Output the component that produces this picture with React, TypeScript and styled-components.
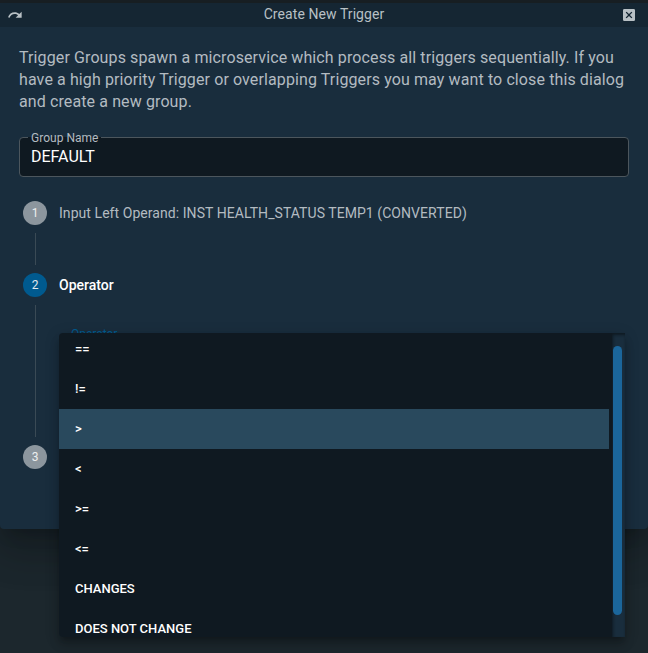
import React from "react";
import styled, { createGlobalStyle } from "styled-components";

const GlobalStyle = createGlobalStyle`
  *, *::before, *::after { box-sizing: border-box; }
  body {
    margin: 0;
    overflow: hidden;
    background: #1c272d;
    font-family: Roboto, "Liberation Sans", sans-serif;
    color: #fff;
  }
`;

const Page = styled.div`
  position: relative;
  height: 653px;
  padding-top: 3px;
  overflow: hidden;
  background: linear-gradient(#1a2126 0, #1a2126 3px, #1c272d 3px);
`;

const Dialog = styled.section`
  height: 526px;
  border-radius: 4px;
  background: #192d3d;
  box-shadow: 0 11px 15px -7px rgba(0, 0, 0, 0.2),
    0 24px 38px 3px rgba(0, 0, 0, 0.14), 0 9px 46px 8px rgba(0, 0, 0, 0.12);
`;

const TitleBar = styled.header`
  display: flex;
  align-items: center;
  justify-content: space-between;
  height: 24px;
  padding: 0 11px 0 7px;
  background: #152633;
  color: #b8c0c5;
`;

const Title = styled.h1`
  margin: 0;
  padding: 0 0 2px 4px;
  font-size: 14px;
  font-weight: 400;
  line-height: 20px;
  letter-spacing: 0.08px;
`;

const Icon = styled.svg`
  display: block;
  width: 16px;
  height: 16px;
  fill: currentColor;
`;

const Body = styled.div`
  padding: 20px 19px 0;
`;

const Intro = styled.p`
  margin: 0;
  color: #b3bbc1;
  font-size: 16px;
  line-height: 22px;
  letter-spacing: 0.11px;
  white-space: nowrap;
`;

const Field = styled.div`
  position: relative;
  height: 48px;
  margin-top: 24px;
`;

const FieldBox = styled.div`
  height: 40px;
  padding: 9px 11px 0;
  border: 1px solid #4c565d;
  border-radius: 4px;
  background: #0f1921;
  font-size: 16px;
  line-height: 20px;
`;

const FieldLabel = styled.span`
  position: absolute;
  z-index: 1;
  top: -8px;
  left: 9px;
  padding: 0 3px;
  color: #b3bbc1;
  font-size: 12px;
  line-height: 18px;
  letter-spacing: 0.02px;

  &::before {
    content: "";
    position: absolute;
    z-index: -1;
    inset: 8px 0 9px;
    background: #0f1921;
  }
`;

const Stepper = styled.div`
  display: flex;
  flex-direction: column;
  padding: 16px 4px 0;
`;

const Step = styled.div<{ $active?: boolean }>`
  display: flex;
  align-items: center;
  gap: 12px;
  height: 24px;
  color: ${(p) => (p.$active ? "#fff" : "#b3bbc1")};
  font-size: 14px;
  font-weight: ${(p) => (p.$active ? 500 : 400)};
  letter-spacing: ${(p) => (p.$active ? "0" : "0.06px")};
`;

const Badge = styled.span<{ $active?: boolean }>`
  display: grid;
  place-items: center;
  width: 24px;
  height: 24px;
  border-radius: 50%;
  background: ${(p) => (p.$active ? "#005a8f" : "#8c969e")};
  color: ${(p) => (p.$active ? "#e1eaf0" : "#eceeef")};
  font-size: 12px;
  font-weight: 400;
  letter-spacing: 0;
`;

const Connector = styled.div<{ $height: number }>`
  width: 1px;
  height: ${(p) => p.$height}px;
  margin: 8px 0 8px 12px;
  background: #3a4a55;
`;

const StepContent = styled.div`
  display: flex;
`;

const OperatorLabel = styled.span`
  margin: 28px 0 0 35px;
  color: #005a8f;
  font-size: 12px;
  line-height: 18px;
`;

const Menu = styled.div`
  position: absolute;
  top: 333px;
  left: 59px;
  width: 566px;
  height: 304px;
  border-radius: 4px;
  box-shadow: 0 5px 5px -3px rgba(0, 0, 0, 0.2),
    0 8px 10px 1px rgba(0, 0, 0, 0.14), 0 3px 14px 2px rgba(0, 0, 0, 0.12);
`;

const MenuSheet = styled.div`
  display: flex;
  height: 100%;
  overflow: hidden;
  border-radius: 4px 0 0 4px;
  background: #0f1921;
`;

const Options = styled.div`
  width: 550px;
  margin-top: -4px;
`;

const Option = styled.div<{ $selected?: boolean }>`
  display: flex;
  align-items: center;
  height: 40px;
  padding: 0 16px;
  background: ${(p) => (p.$selected ? "#29495d" : "transparent")};
  font-size: 13px;
  font-weight: 500;
  line-height: 16px;
`;

const Track = styled.div`
  width: 13px;
  height: 304px;
  margin-left: 3px;
  padding: 13px 3px 0 1px;
  background: #192d3d;
  box-shadow: inset 1px 2px 3px #0f1a22;
`;

const Thumb = styled.div`
  width: 9px;
  height: 269px;
  border-radius: 5px;
  background: #1b669b;
`;

const operators = ["==", "!=", ">", "<", ">=", "<=", "CHANGES", "DOES NOT CHANGE"];

export default function App() {
  return (
    <Page>
      <GlobalStyle />
      <Dialog>
        <TitleBar>
          <Icon viewBox="0 0 24 24">
            <path d="M18.4,10.6C16.55,9 14.15,8 11.5,8C6.85,8 2.92,11.03 1.54,15.22L3.9,16C4.95,12.81 7.95,10.5 11.5,10.5C13.45,10.5 15.23,11.22 16.62,12.38L13,16H22V7L18.4,10.6Z" />
          </Icon>
          <Title>Create New Trigger</Title>
          <Icon viewBox="0 0 24 24">
            <path d="M19,3H5A2,2 0 0,0 3,5V19A2,2 0 0,0 5,21H19A2,2 0 0,0 21,19V5A2,2 0 0,0 19,3M15.6,17L12,13.4L8.4,17L7,15.6L10.6,12L7,8.4L8.4,7L12,10.6L15.6,7L17,8.4L13.4,12L17,15.6L15.6,17Z" />
          </Icon>
        </TitleBar>
        <Body>
          <Intro>
            Trigger Groups spawn a microservice which process all triggers sequentially. If you
            <br />
            have a high priority Trigger or overlapping Triggers you may want to close this dialog
            <br />
            and create a new group.
          </Intro>
          <Field>
            <FieldLabel>Group Name</FieldLabel>
            <FieldBox>DEFAULT</FieldBox>
          </Field>
          <Stepper>
            <Step>
              <Badge>1</Badge>
              Input Left Operand: INST HEALTH_STATUS TEMP1 (CONVERTED)
            </Step>
            <Connector $height={32} />
            <Step $active>
              <Badge $active>2</Badge>
              Operator
            </Step>
            <StepContent>
              <Connector $height={132} />
              <OperatorLabel>Operator</OperatorLabel>
            </StepContent>
            <Step>
              <Badge>3</Badge>
            </Step>
          </Stepper>
        </Body>
      </Dialog>
      <Menu>
        <MenuSheet>
          <Options>
            {operators.map((op) => (
              <Option key={op} $selected={op === ">"}>
                {op}
              </Option>
            ))}
          </Options>
          <Track>
            <Thumb />
          </Track>
        </MenuSheet>
      </Menu>
    </Page>
  );
}
